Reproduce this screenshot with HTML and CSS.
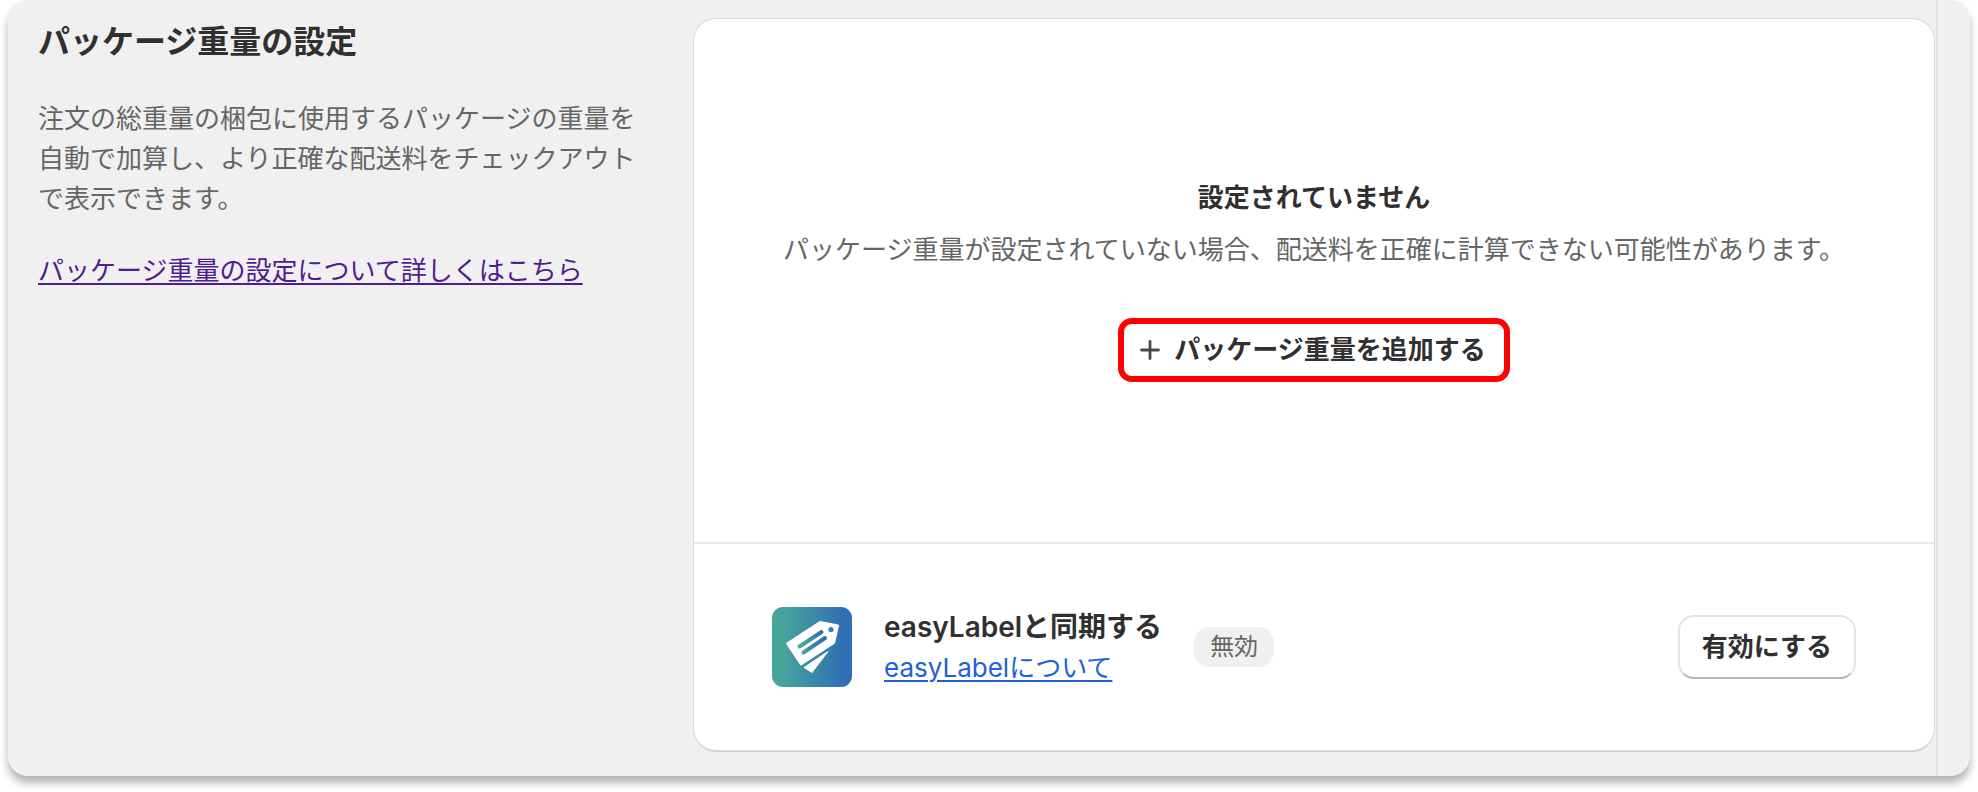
FILE: index.html
```
<!DOCTYPE html>
<html lang="ja">
<head>
    <meta charset="UTF-8">
    <title>パッケージ重量の設定</title>
    <link rel="stylesheet" href="styles.css">
</head>
<body>
    <main class="panel">
        <div class="content">
            <section class="intro">
                <h1>パッケージ重量の設定</h1>
                <p>注文の総重量の梱包に使用するパッケージの重量を自動で加算し、より正確な配送料をチェックアウトで表示できます。</p>
                <a class="help-link" href="#">パッケージ重量の設定について詳しくはこちら</a>
            </section>

            <section class="card">
                <div class="empty">
                    <h2>設定されていません</h2>
                    <p>パッケージ重量が設定されていない場合、配送料を正確に計算できない可能性があります。</p>
                    <button type="button" class="add-button">
                        <svg width="20" height="20" viewBox="0 0 20 20" aria-hidden="true">
                            <path d="M10 1.5v17M1.5 10h17" fill="none" stroke="#4a4a4a" stroke-width="2.8" stroke-linecap="round"/>
                        </svg>
                        パッケージ重量を追加する
                    </button>
                </div>

                <!-- アプリ連携 -->
                <div class="sync">
                    <svg class="app-icon" width="80" height="80" viewBox="0 0 80 80" aria-hidden="true">
                        <defs>
                            <linearGradient id="appBg" x1="0" y1="0" x2="1" y2="0">
                                <stop offset="0.1" stop-color="#48a59b"/>
                                <stop offset="0.9" stop-color="#316fb5"/>
                            </linearGradient>
                        </defs>
                        <rect width="80" height="80" rx="11" fill="url(#appBg)"/>
                        <path d="M32 60.5L56 44.5L40 65.5Z" fill="#fff" stroke="#fff" stroke-width="1" stroke-linejoin="round"/>
                        <path d="M15 36.5L48 15L66 18.5L62 36L29 57.5Z" fill="#fff" stroke="#fff" stroke-width="2" stroke-linejoin="round"/>
                        <circle cx="59" cy="22.5" r="2.6" fill="#367db0"/>
                        <path d="M27.5 39.5L49.5 25M31.5 45.5L53 31" stroke="url(#appBg)" stroke-width="4" stroke-linecap="round"/>
                    </svg>
                    <div class="sync-text">
                        <h2>easyLabelと同期する</h2>
                        <a href="#">easyLabelについて</a>
                    </div>
                    <span class="badge">無効</span>
                    <button type="button" class="enable-button">有効にする</button>
                </div>
            </section>
        </div>
    </main>
</body>
</html>
```
FILE: styles.css
```
* {
    box-sizing: border-box;
}

body {
    margin: 0;
    padding: 0 8px 16px;
    background-color: #fff;
    color: #303030;
    font-family: Inter, "Noto Sans CJK JP", sans-serif;
    font-size: 26px;
    line-height: 40px;
}

h1,
h2,
p {
    margin: 0;
}

button {
    font-family: inherit;
    font-size: 26px;
    font-weight: 600;
    line-height: 40px;
    color: #303030;
    background-color: #fff;
    cursor: pointer;
}

a {
    color: #2260d6;
    text-decoration-thickness: 2px;
    text-underline-offset: 3px;
}

.panel {
    background-color: #f0f0f0;
    border-radius: 20px;
    padding-right: 32px;
    box-shadow: 0 7px 8px rgba(0, 0, 0, 0.3);
}

.content {
    display: grid;
    grid-template-columns: 1fr 2fr;
    gap: 36px;
    padding: 19px 2px 26px 30px;
    border-right: 2px solid #e0e0e0;
}

.intro h1 {
    font-size: 32px;
    font-weight: 600;
    line-height: 46px;
    margin-bottom: 34px;
}

.intro p {
    color: #666;
    margin-bottom: 32px;
}

.intro .help-link {
    color: #4f1d91;
}

.card {
    background-color: #fff;
    border-radius: 22px;
    box-shadow: 0 0 0 1px #dadada, 0 2px 1px rgba(0, 0, 0, 0.16);
}

.empty {
    display: flex;
    flex-direction: column;
    align-items: center;
    padding: 159px 32px 160px;
    border-bottom: 2px solid #e8e8e8;
}

.empty h2 {
    font-size: 26px;
    font-weight: 600;
    margin-bottom: 12px;
}

.empty p {
    color: #666;
    margin-bottom: 48px;
}

.add-button {
    display: flex;
    align-items: center;
    gap: 14px;
    padding: 6px 18px 6px 16px;
    border: 6px solid #f00;
    border-radius: 14px;
}

.sync {
    display: flex;
    align-items: center;
    padding: 62px 78px;
}

.sync-text {
    margin: 0 32px;
}

.sync-text h2 {
    font-size: 28px;
    font-weight: 600;
    line-height: 42px;
}

.badge {
    padding: 0 16px;
    border-radius: 16px;
    background-color: #f0f0f0;
    color: #666;
    font-size: 24px;
}

.enable-button {
    margin-left: auto;
    padding: 10px 22px;
    border: 2px solid #e3e3e3;
    border-bottom-color: #b5b5b5;
    border-radius: 16px;
}
```
